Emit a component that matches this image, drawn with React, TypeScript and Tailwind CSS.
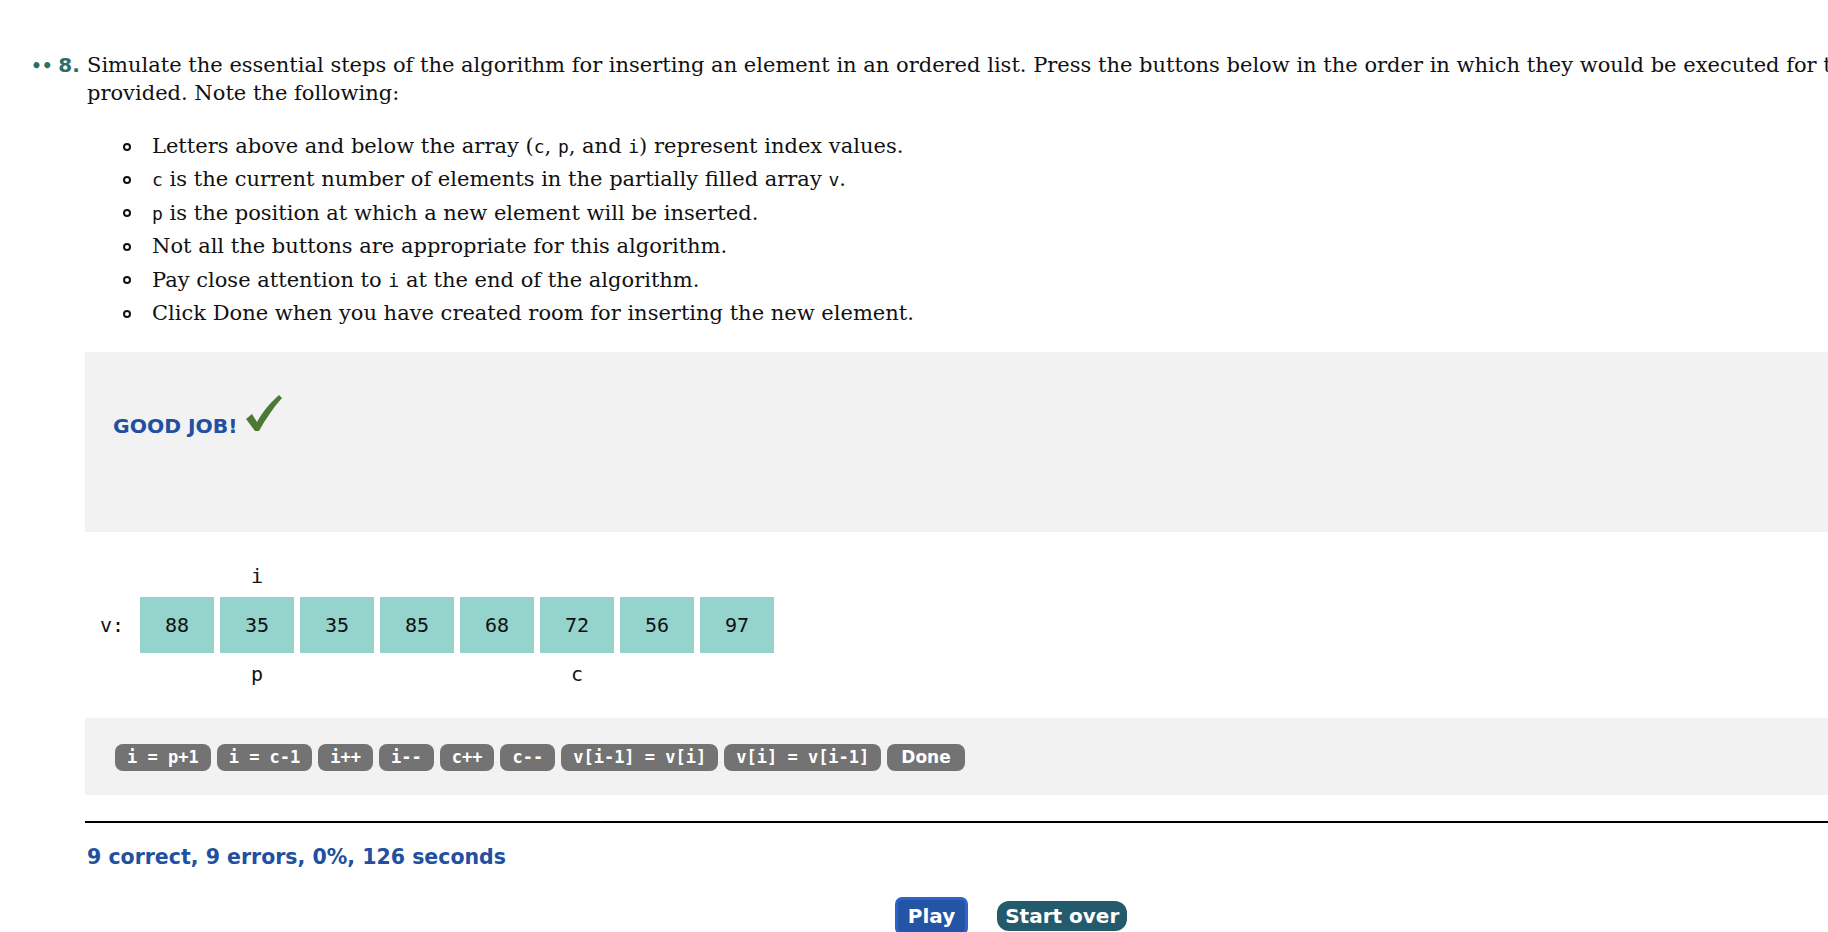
import React from 'react';

const values = [88, 35, 35, 85, 68, 72, 56, 97];
const above = ['', 'i', '', '', '', '', '', ''];
const below = ['', 'p', '', '', '', 'c', '', ''];

const buttons = ['i = p+1', 'i = c-1', 'i++', 'i--', 'c++', 'c--', 'v[i-1] = v[i]', 'v[i] = v[i-1]'];

const notes: React.ReactNode[] = [
  <>
    Letters above and below the array (<Code>c</Code>, <Code>p</Code>, and <Code>i</Code>) represent index values.
  </>,
  <>
    <Code>c</Code> is the current number of elements in the partially filled array <Code>v</Code>.
  </>,
  <>
    <Code>p</Code> is the position at which a new element will be inserted.
  </>,
  <>Not all the buttons are appropriate for this algorithm.</>,
  <>
    Pay close attention to <Code>i</Code> at the end of the algorithm.
  </>,
  <>Click Done when you have created room for inserting the new element.</>,
];

function Code({ children }: { children: React.ReactNode }) {
  return <span className="font-['DejaVu_Sans_Mono',monospace] text-[18px]">{children}</span>;
}

function LabelRow({ labels }: { labels: string[] }) {
  return (
    <div className="flex">
      <div className="w-[55px] shrink-0" />
      <div className="flex gap-[6px]">
        {labels.map((l, i) => (
          <div key={i} className="w-[74px] h-[30px] flex items-center justify-center">
            {l}
          </div>
        ))}
      </div>
    </div>
  );
}

const App: React.FC = () => {
  return (
    <div className="h-screen w-screen overflow-hidden bg-white text-[#111]">
      <div className="w-[1937px] pl-[31px] pt-[51px]">
        <div className="flex items-baseline">
          <div className="w-[54px] shrink-0 whitespace-nowrap font-['DejaVu_Sans',sans-serif] font-bold text-[#2c6e6a] leading-[28px]">
            <span className="text-[17px]">••</span> <span className="text-[20px]">8.</span>
          </div>

          <div className="w-[1852px]">
            <p className="pl-[2px] font-['DejaVu_Serif',serif] text-[21px] leading-[28px]">
              Simulate the essential steps of the algorithm for inserting an element in an ordered list. Press the buttons below in the order in which they would be executed for the data provided. Note the following:
            </p>

            <ul className="mt-[23px] font-['DejaVu_Serif',serif] text-[21px]">
              {notes.map((n, i) => (
                <li key={i} className="flex items-center h-[33.4px] pl-[38px]">
                  <span className="w-[8px] h-[8px] rounded-full border-2 border-[#111] shrink-0 mr-[21px]" />
                  <span className="whitespace-nowrap">{n}</span>
                </li>
              ))}
            </ul>

            <div className="mt-[22px] h-[180px] bg-[#f2f2f2] pl-[28px] pt-[43px]">
              <div className="flex items-end">
                <span className="font-['DejaVu_Sans',sans-serif] font-bold text-[20.3px] leading-[24px] text-[#2150a0]">
                  GOOD JOB!
                </span>
                <svg width="36" height="38" viewBox="0 0 36 38" className="ml-[8px] mb-[5px]">
                  <path
                    d="M0 24 L6 19 L11 27 C17 16 25 7 33 0 L36 3 C27 13 19 25 13 36 L9 36 Z"
                    fill="#4c7a34"
                  />
                </svg>
              </div>
            </div>

            <div className="pt-[29px] pb-[29px] font-['DejaVu_Sans_Mono',monospace] text-[20px]">
              <LabelRow labels={above} />
              <div className="flex mt-[6px]">
                <div className="w-[55px] shrink-0 h-[56px] flex items-center justify-end pr-[16px]">v:</div>
                <div className="flex gap-[6px]">
                  {values.map((v, i) => (
                    <div key={i} className="w-[74px] h-[56px] bg-[#95d3cd] flex items-center justify-center">
                      {v}
                    </div>
                  ))}
                </div>
              </div>
              <div className="mt-[6px]">
                <LabelRow labels={below} />
              </div>
            </div>

            <div className="h-[77px] bg-[#f2f2f2] pl-[30px] pt-[26px]">
              <div className="flex gap-[6px]">
                {buttons.map((b) => (
                  <button
                    key={b}
                    className="h-[27px] px-[12px] rounded-[8px] bg-[#737373] text-white font-['DejaVu_Sans_Mono',monospace] font-bold text-[17px] whitespace-pre flex items-center"
                  >
                    {b}
                  </button>
                ))}
                <button className="h-[27px] px-[14px] rounded-[8px] bg-[#737373] text-white font-['DejaVu_Sans',sans-serif] font-bold text-[17px] flex items-center">
                  Done
                </button>
              </div>
            </div>

            <div className="mt-[26px] h-[2px] bg-black" />

            <div className="mt-[22px] pl-[2px] font-['DejaVu_Sans',sans-serif] font-bold text-[20.5px] leading-[24px] text-[#2150a0]">
              9 correct, 9 errors, 0%, 126 seconds
            </div>

            <div className="mt-[28px] flex justify-center items-center gap-[29px] font-['DejaVu_Sans',sans-serif] font-bold text-[20px] text-white">
              <button className="h-[38px] px-[10px] rounded-[7px] bg-[#2354a5] border-[3px] border-[#2e64c9]">Play</button>
              <button className="h-[30px] px-[8px] rounded-[12px] bg-[#245b6c]">Start over</button>
            </div>
          </div>
        </div>
      </div>
    </div>
  );
};

export default App;
